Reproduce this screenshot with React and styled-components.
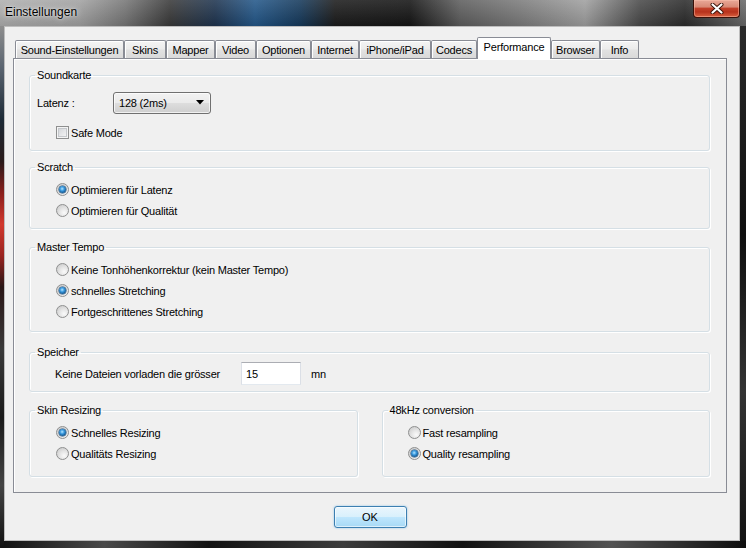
import React from 'react';
import styled, { createGlobalStyle } from 'styled-components';

const GlobalStyle = createGlobalStyle`
  html, body {
    margin: 0;
    padding: 0;
    background: #1a1a1a;
  }
  body {
    font-family: "Liberation Sans", Arial, sans-serif;
    font-size: 11px;
    color: #000;
  }
  * {
    box-sizing: border-box;
  }
`;

const tabs = [
  { label: 'Sound-Einstellungen', width: 109 },
  { label: 'Skins', width: 42 },
  { label: 'Mapper', width: 49 },
  { label: 'Video', width: 41 },
  { label: 'Optionen', width: 55 },
  { label: 'Internet', width: 48 },
  { label: 'iPhone/iPad', width: 72 },
  { label: 'Codecs', width: 46 },
  { label: 'Performance', width: 74, active: true },
  { label: 'Browser', width: 49 },
  { label: 'Info', width: 39 },
];

const Radio = ({ checked, children }) => (
  <OptionRow>
    <RadioDot $on={checked} />
    <OptionLabel>{children}</OptionLabel>
  </OptionRow>
);

export default function App() {
  return (
    <>
      <GlobalStyle />
      <Frame>
        <TitleBar>
          <Title>Einstellungen</Title>
          <CloseButton>
            <svg width="14" height="11" viewBox="0 0 14 11">
              <path d="M2.5 1.5 L11.5 9.5 M11.5 1.5 L2.5 9.5" stroke="#3a1208" strokeWidth="4" strokeLinecap="round" />
              <path d="M2.5 1.5 L11.5 9.5 M11.5 1.5 L2.5 9.5" stroke="#fff" strokeWidth="2.2" strokeLinecap="round" />
            </svg>
          </CloseButton>
        </TitleBar>

        <Body>
          <Client>
            <TabRow>
              {tabs.map((t) => (
                <Tab key={t.label} $width={t.width} $active={t.active}>
                  {t.label}
                </Tab>
              ))}
            </TabRow>

            <Panel>
              <Group>
                <Legend>Soundkarte</Legend>
                <GroupBody $pad="10px 0 7px 7px">
                  <FieldRow>
                    <FieldLabel $width={76}>Latenz :</FieldLabel>
                    <Combo>
                      <span>128 (2ms)</span>
                      <svg width="8" height="5" viewBox="0 0 8 5">
                        <polygon points="0,0 8,0 4,4.5" fill="#000" />
                      </svg>
                    </Combo>
                  </FieldRow>
                  <OptionRow $indent={19} $mt={8}>
                    <CheckBox />
                    <OptionLabel>Safe Mode</OptionLabel>
                  </OptionRow>
                </GroupBody>
              </Group>

              <Group $mt={10}>
                <Legend>Scratch</Legend>
                <GroupBody $pad="5px 0 7px 26px">
                  <Radio checked>Optimieren für Latenz</Radio>
                  <Radio>Optimieren für Qualität</Radio>
                </GroupBody>
              </Group>

              <Group $mt={12}>
                <Legend>Master Tempo</Legend>
                <GroupBody $pad="5px 0 9px 26px">
                  <Radio>Keine Tonhöhenkorrektur (kein Master Tempo)</Radio>
                  <Radio checked>schnelles Stretching</Radio>
                  <Radio>Fortgeschrittenes Stretching</Radio>
                </GroupBody>
              </Group>

              <Group $mt={14}>
                <Legend>Speicher</Legend>
                <GroupBody $pad="3px 0 6px 25px">
                  <FieldRow $height={23}>
                    <FieldLabel $width={186}>Keine Dateien vorladen die grösser</FieldLabel>
                    <TextBox>15</TextBox>
                    <Unit>mn</Unit>
                  </FieldRow>
                </GroupBody>
              </Group>

              <SplitRow>
                <Group $flex="1">
                  <Legend>Skin Resizing</Legend>
                  <GroupBody $pad="5px 0 12px 26px">
                    <Radio checked>Schnelles Resizing</Radio>
                    <Radio>Qualitäts Resizing</Radio>
                  </GroupBody>
                </Group>
                <Group $flex="1">
                  <Legend>48kHz conversion</Legend>
                  <GroupBody $pad="5px 0 12px 25px">
                    <Radio>Fast resampling</Radio>
                    <Radio checked>Quality resampling</Radio>
                  </GroupBody>
                </Group>
              </SplitRow>
            </Panel>

            <Footer>
              <OkButton>OK</OkButton>
            </Footer>
          </Client>
        </Body>
      </Frame>
    </>
  );
}

const Frame = styled.div`
  width: 746px;
  height: 548px;
  display: flex;
  flex-direction: column;
  overflow: hidden;
`;

const TitleBar = styled.div`
  height: 26px;
  flex: none;
  display: flex;
  justify-content: space-between;
  align-items: flex-start;
  padding-left: 5px;
  background:
    linear-gradient(180deg, rgba(255, 255, 255, 0.12), rgba(0, 0, 0, 0.12)),
    linear-gradient(
      90deg,
      #b0b0b0 0px,
      #a2a2a2 80px,
      #777 125px,
      #3a3a3a 170px,
      #1f3550 215px,
      #24588a 255px,
      #163a5c 300px,
      #1c1c1c 335px,
      #151515 410px,
      #5e5e5e 460px,
      #7c7c7c 520px,
      #a0a0a0 585px,
      #4a4a4a 640px,
      #2c2c2c 685px,
      #6a6a6a 746px
    );
`;

const Title = styled.span`
  margin-top: 5px;
  font-family: "Liberation Sans", Arial, sans-serif;
  font-size: 12px;
  line-height: 14px;
  color: #000;
  text-shadow: 0 0 6px rgba(255, 255, 255, 0.9), 0 0 2px rgba(255, 255, 255, 0.7);
`;

const CloseButton = styled.div`
  width: 47px;
  height: 18px;
  margin-right: 6px;
  display: flex;
  align-items: center;
  justify-content: center;
  border: 1px solid #3a1008;
  border-top: none;
  border-radius: 0 0 4px 4px;
  background: linear-gradient(
    180deg,
    #e9a998 0%,
    #d98a76 40%,
    #c2412a 50%,
    #b8321c 70%,
    #d8603f 100%
  );
  box-shadow: inset 0 0 0 1px rgba(255, 200, 180, 0.45);
`;

const Body = styled.div`
  flex: 1;
  display: flex;
  padding: 0 6px 7px 4px;
  background:
    linear-gradient(
        180deg,
        #8e8e8e 0%,
        #5a6470 8%,
        #1d2a36 18%,
        #2a1a1a 26%,
        #8a1f1c 32%,
        #d2392e 38%,
        #9a2420 44%,
        #2a1616 50%,
        #3a3a3a 62%,
        #1a1a1a 75%,
        #444 88%,
        #111 100%
      )
      left top / 4px 100% no-repeat,
    linear-gradient(
        90deg,
        #101010 0%,
        #4a4a4a 14%,
        #121212 28%,
        #3c3c3c 46%,
        #111 62%,
        #525252 82%,
        #0e0e0e 100%
      )
      left bottom / 100% 7px no-repeat,
    linear-gradient(180deg, #2a2a2a, #0f0f0f 40%, #333 70%, #111);
`;

const Client = styled.div`
  flex: 1;
  display: flex;
  flex-direction: column;
  padding: 10px 12px 0 8px;
  background: #f0f0f0;
  border: 1px solid #bdbdbd;
`;

const TabRow = styled.div`
  display: flex;
  align-items: flex-end;
  padding-left: 2px;
  flex: none;
`;

const Tab = styled.div`
  width: ${(p) => p.$width}px;
  height: ${(p) => (p.$active ? 22 : 18)}px;
  margin-bottom: ${(p) => (p.$active ? -1 : 0)}px;
  padding-bottom: ${(p) => (p.$active ? 3 : 0)}px;
  position: relative;
  z-index: ${(p) => (p.$active ? 1 : 0)};
  display: flex;
  align-items: center;
  justify-content: center;
  border: 1px solid #898c95;
  border-bottom: none;
  border-radius: 2px 2px 0 0;
  letter-spacing: -0.2px;
  white-space: nowrap;
  background: ${(p) =>
    p.$active
      ? '#ffffff'
      : 'linear-gradient(180deg, #f4f4f4 0%, #ececec 45%, #e1e1e1 55%, #d9d9d9 100%)'};
  box-shadow: inset 1px 1px 0 #fff;
`;

const Panel = styled.div`
  flex: 1;
  display: flex;
  flex-direction: column;
  padding: 10px 16px 15px 15px;
  border: 1px solid #898c95;
  background: #f0f0f0;
  box-shadow: inset 1px 1px 0 #fff;
`;

const Group = styled.fieldset`
  margin: ${(p) => p.$mt || 0}px 0 0;
  padding: 0;
  min-width: 0;
  flex: ${(p) => p.$flex || 'none'};
  border: 1px solid #d5dfe5;
  border-radius: 3px;
  box-shadow: inset 1px 1px 0 #fff, 1px 1px 0 #fff;
`;

const Legend = styled.legend`
  margin-left: 5px;
  padding: 0 2px;
  font-size: 11px;
  line-height: 13px;
  letter-spacing: -0.2px;
`;

const GroupBody = styled.div`
  display: flex;
  flex-direction: column;
  padding: ${(p) => p.$pad};
`;

const FieldRow = styled.div`
  display: flex;
  align-items: center;
  height: ${(p) => p.$height || 22}px;
`;

const FieldLabel = styled.span`
  width: ${(p) => p.$width}px;
  flex: none;
  letter-spacing: -0.2px;
  white-space: nowrap;
`;

const Combo = styled.div`
  width: 98px;
  height: 22px;
  display: flex;
  align-items: center;
  justify-content: space-between;
  padding: 0 6px 1px 5px;
  border: 1px solid #707070;
  border-radius: 3px;
  letter-spacing: -0.2px;
  background: linear-gradient(180deg, #f2f2f2 0%, #ebebeb 48%, #dddddd 52%, #cfcfcf 100%);
  box-shadow: inset 0 0 0 1px rgba(255, 255, 255, 0.7);
`;

const OptionRow = styled.div`
  display: flex;
  align-items: center;
  height: 21px;
  margin-top: ${(p) => p.$mt || 0}px;
  padding-left: ${(p) => p.$indent || 0}px;
`;

const OptionLabel = styled.span`
  margin-left: 2px;
  letter-spacing: -0.2px;
  white-space: nowrap;
`;

const RadioDot = styled.span`
  width: 13px;
  height: 13px;
  flex: none;
  border-radius: 50%;
  border: 1px solid #8e8f8f;
  display: flex;
  align-items: center;
  justify-content: center;
  background: radial-gradient(circle at 65% 70%, #fafafa 0%, #e6e6e6 40%, #c4c4c4 100%);

  &::after {
    content: '';
    display: ${(p) => (p.$on ? 'block' : 'none')};
    width: 7px;
    height: 7px;
    border-radius: 50%;
    background: radial-gradient(circle at 45% 40%, #b6e6ff 0%, #3b9be0 35%, #145a94 70%, #0b3458 100%);
    box-shadow: 0 0 0 0.5px #1a4a75;
  }
`;

const CheckBox = styled.span`
  width: 13px;
  height: 13px;
  flex: none;
  border: 1px solid #8e8f8f;
  background: linear-gradient(135deg, #cdd0d4 0%, #e4e5e7 50%, #f8f8f8 100%);
  box-shadow: inset 0 0 0 1px #f4f4f4, inset 0 0 0 2px #c5c8cc;
`;

const TextBox = styled.div`
  width: 60px;
  height: 23px;
  display: flex;
  align-items: center;
  padding-left: 4px;
  background: #fff;
  border: 1px solid #dbdfe6;
  border-top-color: #abadb3;
  border-bottom-color: #e3e9ef;
`;

const Unit = styled.span`
  margin-left: 10px;
  letter-spacing: -0.2px;
`;

const SplitRow = styled.div`
  display: flex;
  gap: 24px;
  margin-top: 12px;
`;

const Footer = styled.div`
  height: 47px;
  flex: none;
  display: flex;
  justify-content: center;
  align-items: flex-start;
  padding-top: 13px;
`;

const OkButton = styled.div`
  width: 73px;
  height: 22px;
  display: flex;
  align-items: center;
  justify-content: center;
  border: 1px solid #3c7fb1;
  border-radius: 3px;
  background: linear-gradient(180deg, #eaf6fd 0%, #d9f0fc 48%, #bee6fd 52%, #a7d9f5 100%);
  box-shadow: inset 0 0 0 1px rgba(255, 255, 255, 0.6), 0 0 2px rgba(60, 160, 230, 0.6);
`;
